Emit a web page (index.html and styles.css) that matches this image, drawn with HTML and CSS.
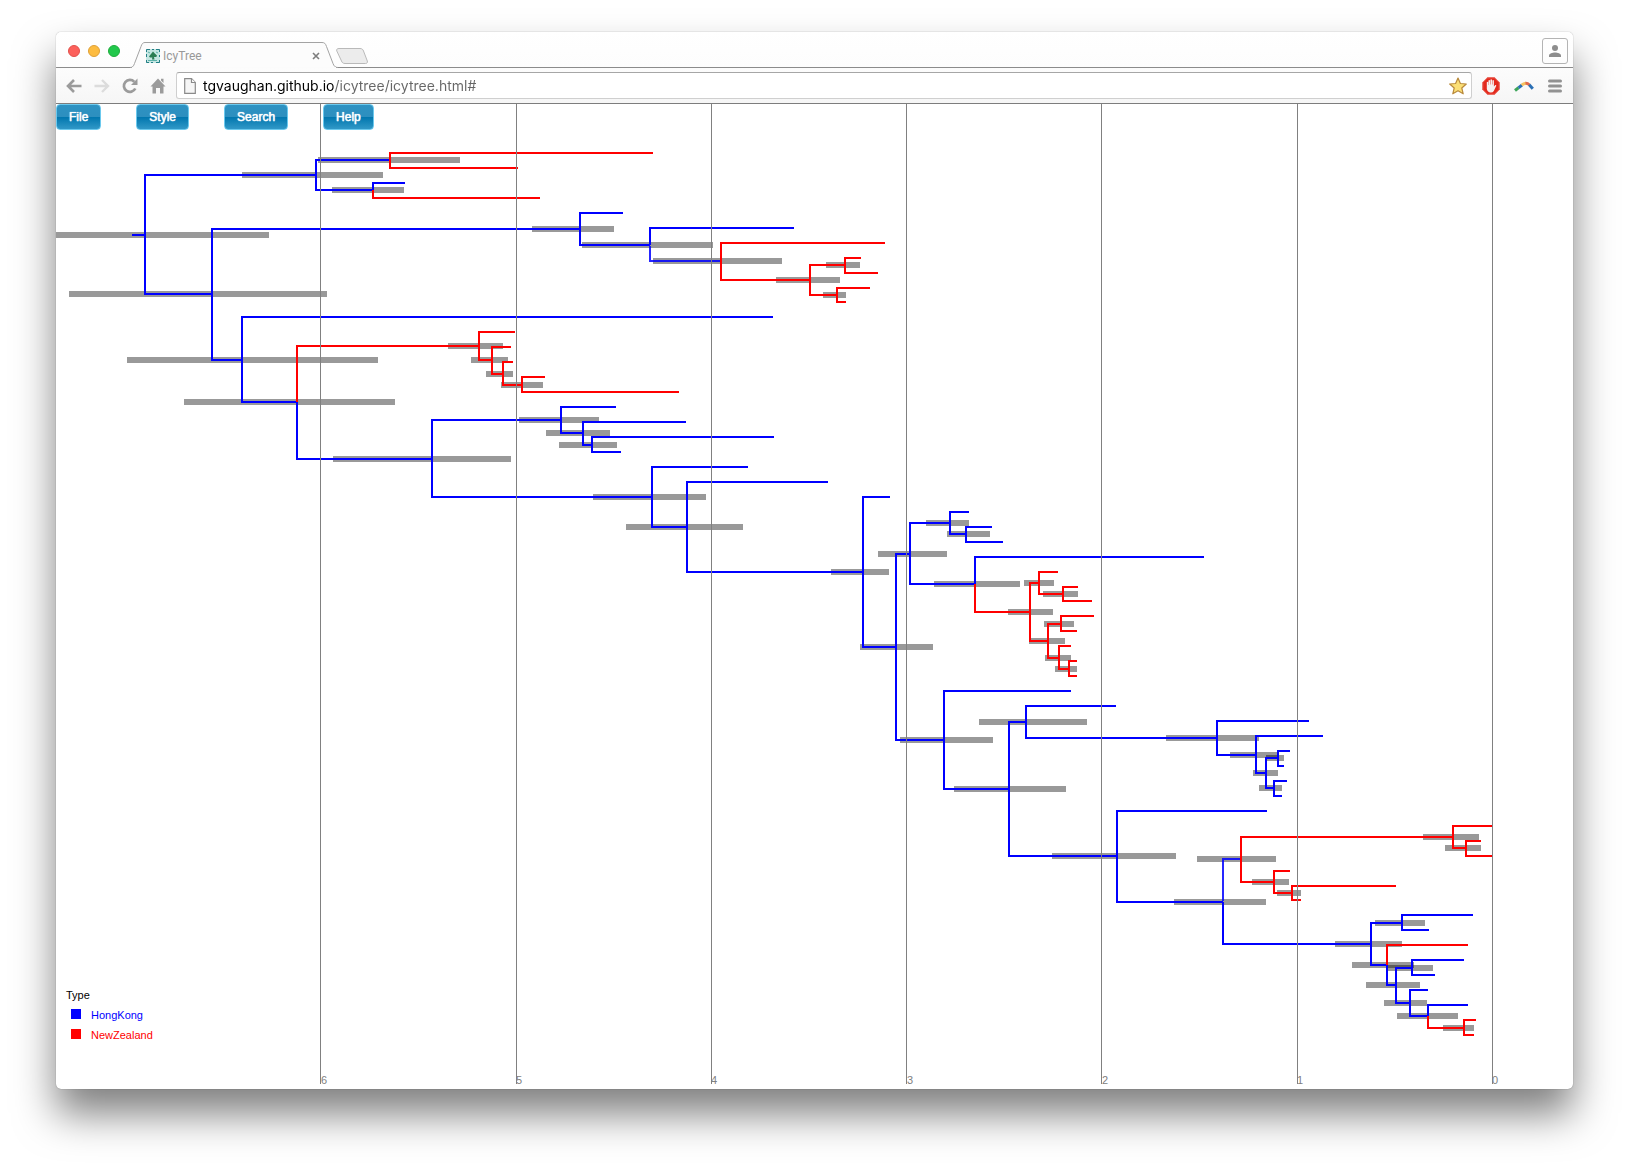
FILE: index.html
```html
<!DOCTYPE html>
<html lang="en">
<head>
<meta charset="utf-8">
<title>IcyTree</title>
<link rel="stylesheet" href="styles.css">
</head>
<body>
<div class="window">
  <header class="titlebar">
    <div class="lights">
      <button class="light light-close" aria-label="Close window"></button>
      <button class="light light-min" aria-label="Minimise window"></button>
      <button class="light light-zoom" aria-label="Zoom window"></button>
    </div>
    <div class="tab">
      <svg class="tab-shape" width="208" height="26" viewBox="0 0 208 26" aria-hidden="true">
        <path d="M0 25.5C3 25.5 3.500 24 4.500 21.500L11 4.500C12 1.500 13 .5 15 .5H192C194.500 .5 195.500 1.500 196.500 4.500L203 21.500C204 24 205 25.500 208 25.500" fill="#fcfcfc" stroke="#a3a3a3"/>
        <path d="M2 25.500H206" stroke="#fbfbfb"/>
      </svg>
      <svg class="favicon" width="14" height="14" viewBox="0 0 14 14" aria-hidden="true">
        <rect width="14" height="14" fill="#c4e6e2"/>
        <path d="M.5 3V.5H4M6 .5H8M10 .5H13.500V3M13.500 6V8M13.500 11V13.500H10M7 13.500H5M3 13.500H.5V11M.5 8V5" fill="none" stroke="#237f86"/>
        <path d="M7 2.500L8.800 4.500L11 6.500L10.300 8H8L8.500 10.500H6L6.300 8.500H4L3 7.500L5 5Z" fill="#2a7d52"/>
        <path d="M2 11.500H11M10 3L12 4M2 3L4 4" stroke="#5cb2a8" fill="none"/>
      </svg>
      <span class="tab-title">IcyTree</span>
      <button class="tab-close" aria-label="Close tab">
        <svg width="8" height="8" viewBox="0 0 8 8"><path d="M1 1L7 7M7 1L1 7" stroke="#7d7d7d" stroke-width="1.600"/></svg>
      </button>
    </div>
    <button class="new-tab" aria-label="New tab">
      <svg width="32" height="16" viewBox="0 0 32 16"><path d="M3 .5H24C26 .5 27 1.500 27.500 3L31.300 13C31.800 14.500 31 15.500 29.500 15.500H9C7 15.500 6 14.500 5.500 13L.8 3C.2 1.500 1 .5 3 .5Z" fill="#ececec" stroke="#b9b9b9"/></svg>
    </button>
    <button class="profile" aria-label="Profile">
      <svg width="12" height="12" viewBox="0 0 12 12"><circle cx="6" cy="3" r="3" fill="#8d8d8d"/><path d="M0 12V10.500C0 8.500 3.500 7.500 6 7.500S12 8.500 12 10.500V12Z" fill="#8d8d8d"/></svg>
    </button>
  </header>

  <nav class="toolbar" aria-label="Browser">
    <div class="tools tools-nav">
      <button aria-label="Back">
        <svg width="16" height="16" viewBox="0 0 16 16"><path d="M15.500 8H2.500M8 2L2 8L8 14" fill="none" stroke="#9b9b9b" stroke-width="2.600"/></svg>
      </button>
      <button aria-label="Forward">
        <svg width="16" height="16" viewBox="0 0 16 16"><path d="M.5 8H13.500M8 2L14 8L8 14" fill="none" stroke="#dcdcdc" stroke-width="2.400"/></svg>
      </button>
      <button aria-label="Reload">
        <svg width="16" height="16" viewBox="0 0 16 16"><path d="M13.300 10.500A6 6 0 1 1 12.300 3.800" fill="none" stroke="#9b9b9b" stroke-width="2.700"/><path d="M15.500 .5V7H9Z" fill="#9b9b9b"/></svg>
      </button>
      <button aria-label="Home">
        <svg width="16" height="16" viewBox="0 0 16 16"><path d="M8 .5L15.500 8.500H13.500V15.500H10V10H6V15.500H2.500V8.500H.5ZM11 .8H13.500V5L11 2.500Z" fill="#9b9b9b"/></svg>
      </button>
    </div>
    <div class="omnibox">
      <svg width="12" height="16" viewBox="0 0 12 16" aria-hidden="true"><path d="M.7 .7H7.500L11.300 4.500V15.300H.7Z" fill="#f6f6f6" stroke="#8b8b8b" stroke-width="1.200"/><path d="M7.500 .7V4.500H11.300" fill="#fff" stroke="#8b8b8b" stroke-width="1.200"/></svg>
      <input class="url" type="text" aria-label="Address" value="tgvaughan.github.io/icytree/icytree.html#">
      <button aria-label="Bookmark this page">
        <svg width="18" height="18" viewBox="0 0 18 18"><path d="M9 1L11.400 6.500L17.300 7L12.800 11L14.200 16.800L9 13.700L3.800 16.800L5.200 11L.7 7L6.600 6.500Z" fill="#fbdf76" stroke="#b98a3c" stroke-width="1.200" stroke-linejoin="round"/></svg>
      </button>
    </div>
    <div class="tools tools-extensions">
      <button aria-label="AdBlock">
        <svg width="18" height="18" viewBox="0 0 18 18"><path d="M5.500 .3H12.500L17.700 5.500V12.500L12.500 17.700H5.500L.3 12.500V5.500Z" fill="#e3291c"/><path d="M5.500 .8H12.500L17.200 5.500V12.500L12.500 17.200H5.500L.8 12.500V5.500Z" fill="none" stroke="#f0897f" stroke-width=".6"/><path d="M4.800 5.200Q5.500 4.200 6.200 5.200V8H6.500V3.500Q7.300 2.300 8 3.500V7.500H8.400V2.700Q9.200 1.600 10 2.700V7.500H10.400V3.500Q11.200 2.500 11.900 3.500V9.500L13.300 8Q14.600 7.800 14.200 9L11.800 14Q10.800 15.800 8.500 15.600Q5.600 15.300 4.800 12Z" fill="#f5f1f0"/></svg>
      </button>
      <button aria-label="Boomerang">
        <svg width="20" height="12" viewBox="0 0 20 12"><g fill="none" stroke-width="3"><path d="M1 10.500L4.500 7.800" stroke="#3da55a"/><path d="M4.500 7.800L8 5" stroke="#2a6fb5"/><path d="M7.700 5.200Q9.500 3.500 12 3.200" stroke="#f6c261"/><path d="M11.500 3.200Q13.500 3 15.500 5" stroke="#e2694a"/><path d="M15.200 4.700L18.800 8.700" stroke="#2a6fb5"/></g></svg>
      </button>
      <button aria-label="Menu">
        <svg width="14" height="14" viewBox="0 0 14 14"><path d="M1.500 2H12.500M1.500 7H12.500M1.500 12H12.500" stroke="#929292" stroke-width="3" stroke-linecap="round"/></svg>
      </button>
    </div>
  </nav>

  <main class="page">
    <div class="menu">
      <button class="menu-button">File</button>
      <button class="menu-button">Style</button>
      <button class="menu-button">Search</button>
      <button class="menu-button">Help</button>
    </div>
    <svg class="tree" viewBox="56 104 1517 985" role="img" aria-label="Phylogenetic tree coloured by type">
      <!-- node height intervals -->
      <path class="bars" d="M318 160H460"/><path class="bars" d="M242 175H383"/><path class="bars" d="M332 190H404"/>
      <path class="bars" d="M56 235H269"/><path class="bars" d="M69 294H327"/><path class="bars" d="M127 360H378"/>
      <path class="bars" d="M184 402H395"/><path class="bars" d="M333 459H511"/><path class="bars" d="M448 346H503"/>
      <path class="bars" d="M471 360H508"/><path class="bars" d="M486 374H513"/><path class="bars" d="M501 385H543"/>
      <path class="bars" d="M532 229H614"/><path class="bars" d="M582 245H713"/><path class="bars" d="M653 261H782"/>
      <path class="bars" d="M826 265H860"/><path class="bars" d="M776 280H840"/><path class="bars" d="M823 295H846"/>
      <path class="bars" d="M519 420H599"/><path class="bars" d="M546 433H610"/><path class="bars" d="M559 445H617"/>
      <path class="bars" d="M593 497H706"/><path class="bars" d="M626 527H743"/><path class="bars" d="M831 572H889"/>
      <path class="bars" d="M860 647H933"/><path class="bars" d="M878 554H947"/><path class="bars" d="M926 523H969"/>
      <path class="bars" d="M947 534H990"/><path class="bars" d="M934 584H1020"/><path class="bars" d="M1024 583H1054"/>
      <path class="bars" d="M1043 594H1078"/><path class="bars" d="M1008 612H1053"/><path class="bars" d="M1044 624H1074"/>
      <path class="bars" d="M1029 641H1065"/><path class="bars" d="M1045 658H1071"/><path class="bars" d="M1055 669H1077"/>
      <path class="bars" d="M900 740H993"/><path class="bars" d="M979 722H1087"/><path class="bars" d="M1166 738H1259"/>
      <path class="bars" d="M1230 755H1278"/><path class="bars" d="M1266 758H1284"/><path class="bars" d="M1253 773H1278"/>
      <path class="bars" d="M1259 788H1282"/><path class="bars" d="M954 789H1066"/><path class="bars" d="M1052 856H1176"/>
      <path class="bars" d="M1197 859H1276"/><path class="bars" d="M1174 902H1266"/><path class="bars" d="M1423 837H1479"/>
      <path class="bars" d="M1445 848H1481"/><path class="bars" d="M1252 882H1289"/><path class="bars" d="M1277 893H1301"/>
      <path class="bars" d="M1375 923H1425"/><path class="bars" d="M1335 944H1402"/><path class="bars" d="M1352 965H1414"/>
      <path class="bars" d="M1387 968H1433"/><path class="bars" d="M1366 985H1420"/><path class="bars" d="M1384 1003H1427"/>
      <path class="bars" d="M1397 1016H1458"/><path class="bars" d="M1443 1028H1474"/>

      <!-- HongKong lineages -->
      <path class="edge hk" d="M132 235H145M316 175H145V294H212M390 160H316V190H373M373 190V183H405M580 229H212V360H242M623 213H580V245H650M650 245V228H794M773 317H242V402H297M297 402V459H432M561 420H432V497H652M616 407H561V433H583M686 422H583V445H592M774 437H592V452H621M748 467H652V527H687M828 482H687V572H863M890 497H863V647H896M910 554H896V740H944M950 523H910V584H975M969 512H950V534H966M992 527H966V542H1003M975 584V557H1204"/>
      <path class="edge hk" d="M1071 691H944V789H1009M1026 722H1009V856H1117M1116 706H1026V738H1217M1309 721H1217V755H1256M1323 736H1256V773H1266M1278 758H1266V788H1274M1290 751H1278V766H1284M1287 781H1274V796H1282M1267 811H1117V902H1223M1223 902V944H1371M1402 923H1371V965H1387M1473 915H1402V930H1429M1387 965V985H1396M1412 968H1396V1003H1410M1464 960H1412V975H1435M1428 990H1410V1016H1428M1428 1016V1005H1468"/>
      <path class="edge hk faded" d="M650 246V261H721M1223 901V859H1241"/>

      <!-- NewZealand lineages -->
      <path class="edge nz" d="M653 153H390V168H518M373 190V198H540M885 243H721V280H810M845 265H810V295H837M861 258H845V273H878M870 288H837V302H846M297 402V346H479M515 332H479V360H492M511 347H492V374H503M513 362H503V385H522M545 377H522V392H679M975 584V612H1030M1039 583H1030V641H1048M1058 572H1039V594H1063M1078 587H1063V601H1092M1061 624H1048V658H1059M1094 616H1061V631H1077M1071 646H1059V669H1069M1077 661H1069V676H1077"/>
      <path class="edge nz" d="M1453 837H1241V882H1274M1492 826H1453V848H1466M1481 841H1466V856H1492M1290 871H1274V893H1292M1396 886H1292V900H1301M1387 965V945H1468M1428 1016V1028H1464M1476 1020H1464V1035H1474"/>

      <!-- time axis -->
      <path class="axis" d="M320.500 104V1084M516.500 104V1084M711.500 104V1084M906.500 104V1084M1101.500 104V1084M1297.500 104V1084M1492.500 104V1084"/>
      <g class="axis-label">
        <text x="321" y="1084">6</text><text x="516" y="1084">5</text><text x="711" y="1084">4</text><text x="907" y="1084">3</text><text x="1102" y="1084">2</text><text x="1297" y="1084">1</text><text x="1492" y="1084">0</text>
      </g>

      <!-- legend -->
      <g class="legend">
        <text x="66" y="999">Type</text>
        <rect class="hk-fill" x="71" y="1009" width="10" height="10"/><text class="hk-fill" x="91" y="1019">HongKong</text>
        <rect class="nz-fill" x="71" y="1029" width="10" height="10"/><text class="nz-fill" x="91" y="1039">NewZealand</text>
      </g>
    </svg>
  </main>
</div>
</body>
</html>
```
FILE: styles.css
```css
* { box-sizing: border-box; }

body {
  margin: 0;
  padding: 32px 56px 80px;
  background: #fff;
  font-family: "Liberation Sans", Arial, sans-serif;
}

button {
  margin: 0;
  padding: 0;
  border: 0;
  background: none;
  font: inherit;
}

svg { display: block; }

.window {
  border-radius: 5px;
  background: #fff;
  box-shadow: 0 0 1px rgba(0, 0, 0, .5), 0 25px 40px rgba(0, 0, 0, .5);
}

.titlebar {
  display: flex;
  align-items: flex-end;
  height: 36px;
  padding-right: 5px;
  border-bottom: 1px solid #8c8c8c;
  border-radius: 5px 5px 0 0;
  background: linear-gradient(#fff, #fdfdfd);
}

.lights {
  display: flex;
  gap: 8px;
  padding: 0 10px 10px 12px;
}

.light {
  width: 12px;
  height: 12px;
  border: 1px solid;
  border-radius: 50%;
}

.light-close { background: #fc605b; border-color: #e2504b; }
.light-min { background: #fdbc40; border-color: #dfa037; }
.light-zoom { background: #22c84c; border-color: #1fad3c; }

.tab {
  position: relative;
  display: flex;
  align-items: center;
  gap: 3px;
  width: 208px;
  height: 26px;
  margin-bottom: -1px;
  padding: 1px 18px 0 16px;
}

.tab-shape {
  position: absolute;
  left: 0;
  top: 0;
}

.favicon { position: relative; }

.tab-title {
  position: relative;
  flex: 1;
  color: #999;
  font: 12px/16px Roboto, sans-serif;
}

.tab-close { position: relative; }

.new-tab { margin: 0 auto 3px -2px; }

.profile {
  display: grid;
  place-items: center;
  width: 26px;
  height: 26px;
  margin-bottom: 3px;
  border: 1px solid #b4b4b4;
  border-radius: 3px;
}

.toolbar {
  display: flex;
  align-items: center;
  gap: 10px;
  height: 36px;
  padding: 0 11px 0 10px;
  border-bottom: 1px solid #7d7d7d;
  background: linear-gradient(#fcfcfc, #f6f6f6);
}

.tools {
  display: flex;
  align-items: center;
}

.tools-nav { gap: 12px; }
.tools-extensions { gap: 14px; }

.omnibox {
  display: flex;
  flex: 1;
  align-items: center;
  gap: 7px;
  height: 27px;
  padding: 0 4px 0 7px;
  border: 1px solid #cfcfcf;
  border-top-color: #a6a6a6;
  border-radius: 3px;
  background: #fff;
}

.url {
  flex: 1;
  min-width: 0;
  padding: 0;
  border: 0;
  outline: 0;
  background: linear-gradient(90deg, #000 132px, #666 132px);
  -webkit-background-clip: text;
  background-clip: text;
  color: transparent;
  font: 14px/20px Inter, sans-serif;
}

.page { position: relative; }

.menu {
  position: absolute;
  left: 0;
  top: 0;
  display: flex;
  gap: 35px;
}

.menu-button {
  height: 26px;
  padding: 0 12px;
  border: 1px solid #6bc9ee;
  border-radius: 4px;
  background: linear-gradient(#2d92c2 0%, #2d8fbf 50%, #0076ae 50%, #3198c7 100%);
  color: #fff;
  font-size: 12px;
  line-height: 24px;
  text-shadow: 0 0 1px #fff;
  -webkit-text-stroke: 1px #fff;
  -webkit-text-stroke-width: thin;
}

.tree {
  width: 100%;
  height: auto;
}

.bars {
  fill: none;
  stroke: #000;
  stroke-opacity: .4;
  stroke-width: 6;
}

.edge {
  fill: none;
  stroke-width: 2;
}

.hk { stroke: #00f; }
.nz { stroke: #f00; }
.faded { stroke-opacity: .85; }

.axis {
  stroke: #808080;
  stroke-width: 1;
}

.axis-label {
  fill: #808080;
  font-size: 11px;
}

.legend { font-size: 11px; }
.hk-fill { fill: #00f; }
.nz-fill { fill: #f00; }
```
